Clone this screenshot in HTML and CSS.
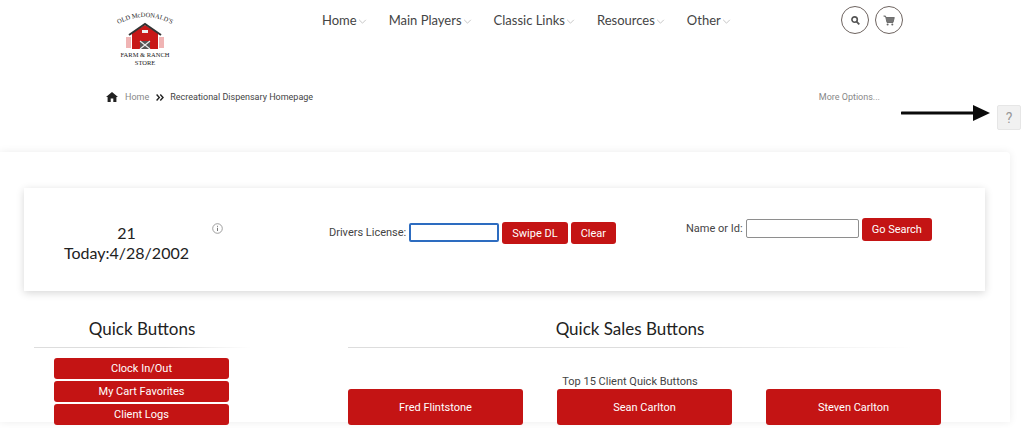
FILE: index.html
```html
<!DOCTYPE html>
<html lang="en">

<head>
    <meta charset="utf-8">
    <title>Recreational Dispensary Homepage</title>
    <link rel="stylesheet" href="styles.css">
</head>

<body>

    <header class="topbar">
        <a class="logo" href="#">
            <svg width="64" height="56" viewBox="0 0 64 56">
                <defs>
                    <path id="logoarc" d="M2 16 Q32 -2 62 16"></path>
                </defs>
                <text class="logo-text"><textPath href="#logoarc" startOffset="50%" text-anchor="middle">OLD McDONALD'S</textPath></text>
                <rect x="13" y="27" width="5" height="11" fill="#f0b4b4"></rect>
                <rect x="46" y="27" width="5" height="11" fill="#f0b4b4"></rect>
                <path d="M19 39V23L32 15 45 23V39Z" fill="#c81818"></path>
                <path d="M16 25 32 14 48 25" fill="none" stroke="#333" stroke-width="2"></path>
                <rect x="29" y="20" width="6" height="3" fill="#eee"></rect>
                <rect x="27" y="31" width="10" height="8" fill="#555"></rect>
                <path d="M27 31 37 39M37 31 27 39" stroke="#eee" stroke-width="1.2"></path>
                <text class="logo-text" x="32" y="47" text-anchor="middle">FARM &amp; RANCH</text>
                <text class="logo-text" x="32" y="55" text-anchor="middle">STORE</text>
            </svg>
        </a>
        <nav class="menu">
            <a href="#">Home<svg class="caret" viewBox="0 0 10 6"><path d="M1 1 5 5 9 1"></path></svg></a>
            <a href="#">Main Players<svg class="caret" viewBox="0 0 10 6"><path d="M1 1 5 5 9 1"></path></svg></a>
            <a href="#">Classic Links<svg class="caret" viewBox="0 0 10 6"><path d="M1 1 5 5 9 1"></path></svg></a>
            <a href="#">Resources<svg class="caret" viewBox="0 0 10 6"><path d="M1 1 5 5 9 1"></path></svg></a>
            <a href="#">Other<svg class="caret" viewBox="0 0 10 6"><path d="M1 1 5 5 9 1"></path></svg></a>
        </nav>
        <div class="round-btns">
            <button class="round">
                <svg width="9" height="9" viewBox="0 0 10 10"><circle cx="4" cy="4" r="3" fill="none" stroke="#555" stroke-width="1.8"></circle><path d="M6.2 6.2 9.2 9.2" stroke="#555" stroke-width="2"></path></svg>
            </button>
            <button class="round">
                <svg width="12" height="11" viewBox="0 0 12 11"><path d="M.5 1H2.5L4 7.5H10L11.3 2.5H3" fill="#777" stroke="#666" stroke-width=".9"></path><circle cx="4.6" cy="9.5" r="1" fill="#666"></circle><circle cx="9.3" cy="9.5" r="1" fill="#666"></circle></svg>
            </button>
        </div>
    </header>

    <div class="crumbs">
        <svg width="12" height="10" viewBox="0 0 12 10"><path d="M6 0 12 5H10.4V10H7.3V6.6H4.7V10H1.6V5H0Z" fill="#222"></path></svg>
        <a class="crumb-home" href="#">Home</a>
        <svg width="8" height="7" viewBox="0 0 8 7"><path d="M.6.6 3.3 3.5.6 6.4M4.3.6 7 3.5 4.3 6.4" fill="none" stroke="#222" stroke-width="1.4"></path></svg>
        <span>Recreational Dispensary Homepage</span>
        <a class="more" href="#">More Options...</a>
    </div>

    <div class="help-row">
        <button class="help">?</button>
        <svg class="arrow" width="90" height="18" viewBox="0 0 90 18"><path d="M1 9H72" stroke="#0a0a0a" stroke-width="3" stroke-linecap="round"></path><path d="M72 1 89 9 72 17Z" fill="#0a0a0a"></path></svg>
    </div>

    <main class="panel">
        <section class="scan-card">
            <div class="today">
                <p>21<br>Today:4/28/2002</p>
                <svg class="info" width="11" height="11" viewBox="0 0 11 11"><circle cx="5.5" cy="5.5" r="4.8" fill="none" stroke="#888" stroke-width=".8"></circle><path d="M5.5 4.8V8M5.5 2.8V3.8" stroke="#777"></path></svg>
            </div>
            <div class="license">
                <label>Drivers License:</label>
                <input class="focused" type="text">
                <button class="red">Swipe DL</button>
                <button class="red">Clear</button>
            </div>
            <div class="namesearch">
                <label>Name or Id:</label>
                <input type="text">
                <button class="red">Go Search</button>
            </div>
        </section>

        <div class="quick">
            <section class="quick-left">
                <h2>Quick Buttons</h2>
                <div class="stack">
                    <button class="red">Clock In/Out</button>
                    <button class="red">My Cart Favorites</button>
                    <button class="red">Client Logs</button>
                </div>
            </section>
            <section class="quick-right">
                <h2>Quick Sales Buttons</h2>
                <p class="top15">Top 15 Client Quick Buttons</p>
                <div class="clients">
                    <button class="red">Fred Flintstone</button>
                    <button class="red">Sean Carlton</button>
                    <button class="red">Steven Carlton</button>
                </div>
            </section>
        </div>
    </main>

</body>

</html>
```

FILE: styles.css
```css
body {
    box-sizing: border-box;
    margin: 0;
    height: 428px;
    overflow: hidden;
    background-color: white;
    font-family: "Roboto", "Liberation Sans", sans-serif;
    color: #333;
}

button {
    font-family: inherit;
}

/*Top*/

.topbar {
    display: flex;
    height: 75px;
    padding-left: 113px;
}

.logo {
    width: 64px;
    margin-top: 10px;
}

.logo-text {
    font-family: "Liberation Serif", serif;
    font-size: 6.5px;
    fill: #222;
}

.menu {
    display: flex;
    gap: 22px;
    margin-left: 145px;
    padding-top: 13px;
    width: 519px;
}

.menu a {
    font-family: "Lato", sans-serif;
    font-size: 13px;
    line-height: 14px;
    color: #444;
    text-decoration: none;
}

.caret {
    width: 9px;
    height: 5px;
    margin-left: 1px;
    margin-bottom: 1px;
    fill: none;
    stroke: #bbb;
}

.round-btns {
    display: flex;
    gap: 6px;
    padding-top: 6px;
}

.round {
    display: flex;
    align-items: center;
    justify-content: center;
    width: 28px;
    height: 28px;
    padding: 0;
    border: 1px solid #6e6460;
    border-radius: 50%;
    background: white;
}

/*Breadcrumb*/

.crumbs {
    display: flex;
    align-items: center;
    gap: 6px;
    height: 14px;
    margin-top: 15px;
    padding-left: 106px;
    font-size: 9px;
    color: #444;
}

.crumb-home {
    margin-left: 1px;
    margin-right: 1px;
    color: #888;
    text-decoration: none;
}

.more {
    margin-left: auto;
    margin-right: 144px;
    color: #888;
    text-decoration: none;
}

.help-row {
    display: flex;
    justify-content: flex-end;
    position: relative;
    height: 48px;
    padding-right: 3px;
    padding-top: 1px;
    box-sizing: border-box;
}

.help {
    width: 24px;
    height: 25px;
    padding: 0;
    border: 1px solid #e6e6e6;
    border-radius: 2px;
    background-color: #f1f1f1;
    font-size: 14px;
    color: #999;
}

.arrow {
    position: absolute;
    left: 901px;
    top: 0;
}

/*Main panel*/

.panel {
    width: 1010px;
    height: 270px;
    padding: 36px 25px 0 24px;
    box-sizing: border-box;
    border-radius: 0 4px 0 0;
    background-color: white;
    box-shadow: 0 0 8px rgba(0, 0, 0, 0.08);
}

.scan-card {
    display: flex;
    height: 103px;
    background-color: white;
    box-shadow: 0 2px 8px rgba(0, 0, 0, 0.16);
}

.today {
    position: relative;
    width: 205px;
    padding-top: 35px;
    box-sizing: border-box;
    font-family: "Lato", sans-serif;
    font-size: 16px;
    line-height: 20px;
    text-align: center;
    color: #222;
}

.today p {
    margin: 0;
}

.info {
    position: absolute;
    left: 188px;
    top: 35px;
}

label {
    font-size: 11px;
    color: #444;
}

input {
    height: 17px;
    padding: 0 1px;
    border: 1px solid #8e8e8e;
    border-radius: 2px;
    background: white;
}

.focused {
    width: 84px;
    border: 2px solid #2d6cc0;
    height: 15px;
}

.red {
    border: none;
    border-radius: 3px;
    background-color: #c41414;
    color: white;
    font-size: 11px;
}

.license {
    display: flex;
    align-items: flex-start;
    gap: 3px;
    width: 365px;
    margin-left: 100px;
    padding-top: 34px;
}

.license label {
    line-height: 21px;
}

.license .red {
    height: 22px;
    padding: 0 10px;
}

.license input {
    margin-top: 1px;
}

.namesearch {
    display: flex;
    align-items: flex-start;
    gap: 3px;
    margin-left: -8px;
    padding-top: 30px;
}

.namesearch label {
    line-height: 21px;
}

.namesearch input {
    width: 109px;
    margin-top: 1px;
}

.namesearch .red {
    height: 23px;
    padding: 0 10px;
}

/*Quick buttons*/

.quick {
    display: flex;
    margin-top: 27px;
}

h2 {
    margin: 0;
    padding-bottom: 7px;
    font-family: "Lato", sans-serif;
    font-size: 17px;
    line-height: 22px;
    font-weight: 400;
    text-align: center;
    color: #222;
    border-bottom: 1px solid transparent;
    border-image: linear-gradient(to right, #ddd 60%, transparent) 1;
}

.quick-left {
    width: 216px;
    margin-left: 10px;
}

.stack {
    display: flex;
    flex-direction: column;
    gap: 2px;
    width: 175px;
    margin: 10px 0 0 20px;
}

.stack .red {
    flex: none;
    height: 21px;
    padding: 0;
}

.quick-right {
    width: 564px;
    margin-left: 98px;
}

.quick-right h2 {
    padding-right: 0;
}

.top15 {
    margin: 27px 0 0;
    height: 13px;
    font-size: 11px;
    line-height: 13px;
    text-align: center;
    color: #444;
}

.clients {
    display: flex;
    gap: 34px;
    margin-top: 1px;
}

.clients .red {
    flex: none;
    width: 175px;
    height: 36px;
}
```
